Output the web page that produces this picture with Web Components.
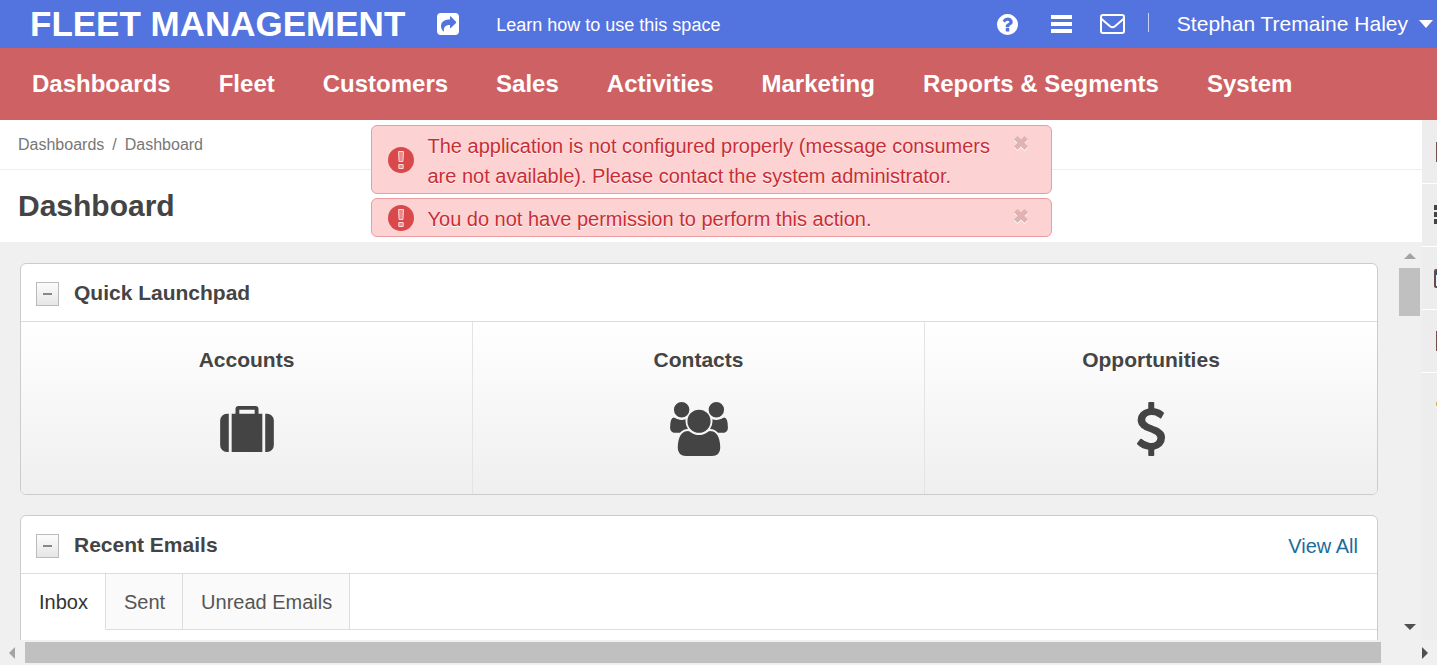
<!DOCTYPE html>
<html lang="en">
<head>
<meta charset="utf-8">
<title>Dashboard - Fleet Management</title>
<style>
html, body { margin: 0; height: 100%; }
body { font-family: "Liberation Sans", Arial, sans-serif; color: #444; background: #f0f0f0; overflow: hidden; }
</style>
</head>
<body>
<fleet-app></fleet-app>

<script>
const define = (name, html, setup) => customElements.define(name, class extends HTMLElement {
  connectedCallback() {
    if (this.shadowRoot) return;
    const root = this.attachShadow({ mode: 'open' });
    const template = document.createElement('template');
    template.innerHTML = html;
    root.append(template.content.cloneNode(true));
    if (setup) setup(root, this);
  }
});

const ICONS = {
  share: ['0 0 22 22', '<path fill-rule="evenodd" d="M4 0H18Q22 0 22 4V18Q22 22 18 22H4Q0 22 0 18V4Q0 0 4 0ZM13 3.6V6.500C7 6.500 4 9 4 13C4 15.500 5 17.400 7 18.800C6.400 14.500 8 12 13 12V14.800Q13 15.600 13.800 15L19 9.900Q19.500 9.300 19 8.700L13.800 3.400Q13 2.800 13 3.600Z"/>'],
  help: ['128 128 1536 1536', '<path d="M1024 1376v-192q0-14-9-23t-23-9h-192q-14 0-23 9t-9 23v192q0 14 9 23t23 9h192q14 0 23-9t9-23zm256-672q0-88-55.500-163t-138.500-116-170-41q-243 0-371 213-15 24 8 42l132 100q7 6 19 6 16 0 25-12 53-68 86-92 34-24 86-24 48 0 85.500 26t37.500 59q0 38-20 61t-68 45q-63 28-115.500 86.500t-52.500 125.500v36q0 14 9 23t23 9h192q14 0 23-9t9-23q0-19 21.500-49.500t54.500-49.500q32-18 49-28.500t46-35 44.500-48 28-60.500 12.500-81zm384 192q0 209-103 385.500t-279.500 279.500-385.500 103-385.500-103-279.500-279.500-103-385.500 103-385.500 279.500-279.500 385.500-103 385.500 103 279.500 279.500 103 385.500z"/>'],
  bars: ['0 0 21 18', '<path d="M0 0h21v4H0zM0 7h21v4H0zM0 14h21v4H0z"/>'],
  mail: ['0 0 25 20', '<g fill="none" stroke="currentColor" stroke-width="2"><rect x="1" y="1" width="23" height="18" rx="2"/><path d="M1 4.500L10 12.200Q12.500 14.200 15 12.200L24 4.500"/></g>'],
  caret: ['0 0 14 8', '<path d="M0 0H14L7 8Z"/>'],
  alert: ['0 0 26 26', '<circle cx="13" cy="13" r="13"/><path d="M10.500 4.500h5l-.6 10h-3.800zM10.800 17.500h4.400v4h-4.400z" fill="#e98a8a" stroke="#fbdada" stroke-width="1"/>'],
  close: ['0 0 14 14', '<path d="M3.500 0L7 3.500L10.500 0L14 3.500L10.500 7L14 10.500L10.500 14L7 10.500L3.500 14L0 10.500L3.500 7L0 3.500Z"/>'],
  suitcase: ['0 0 1792 1536', '<path d="M640 256h512V128H640v128zM288 256v1280h-64q-92 0-158-66T0 1312V480q0-92 66-158t158-66h64zm1120 0v1280H384V256h128V96q0-40 28-68t68-28h576q40 0 68 28t28 68v160h128zm384 224v832q0 92-66 158t-158 66h-64V256h64q92 0 158 66t66 158z"/>'],
  users: ['64 0 1920 1792', '<path d="M657 896q-162 5-265 128h-134q-82 0-138-40.500t-56-118.500q0-353 124-353 6 0 43.500 21t97.500 42.500 119 21.500q67 0 133-23-5 37-5 66 0 139 81 256zm1071 637q0 120-73 189.500t-194 69.500h-874q-121 0-194-69.500t-73-189.500q0-53 3.500-103.500t14-109 26.500-108.500 43-97.500 62-81 85.500-53.500 111.500-20q10 0 43 21.500t73 48 107 48 135 21.500 135-21.500 107-48 73-48 43-21.500q61 0 111.500 20t85.500 53.500 62 81 43 97.500 26.500 108.500 14 109 3.500 103.500zm-1024-1277q0 106-75 181t-181 75-181-75-75-181 75-181 181-75 181 75 75 181zm704 384q0 159-112.500 271.500t-271.500 112.500-271.500-112.500-112.500-271.500 112.500-271.500 271.500-112.500 271.500 112.500 112.500 271.500zm576 225q0 78-56 118.500t-138 40.500h-134q-103-123-265-128 81-117 81-256 0-29-5-66 66 23 133 23 59 0 119-21.500t97.500-42.500 43.500-21q124 0 124 353zm-128-609q0 106-75 181t-181 75-181-75-75-181 75-181 181-75 181 75 75 181z"/>'],
  dollar: ['430 0 932 1792', '<path d="M1362 1185q0 153-99.500 263.500t-258.500 136.500v175q0 14-9 23t-23 9h-135q-13 0-22.500-9.500t-9.500-22.500v-175q-66-9-127.500-31t-101.500-44.500-74-48-46.500-37.500-17.500-18q-17-21-2-41l103-135q7-10 23-12 15-2 24 9l2 2q113 99 243 125 37 8 74 8 81 0 142.500-43t61.500-122q0-28-15-53t-33.500-42-58.500-37.500-66-32-80-32.500q-39-16-61.500-25t-61.500-26.500-62.500-31-56.500-35.500-53.500-42.500-43.500-49-35.500-58-21-66.500-8.500-78q0-138 98-242t255-134v-180q0-13 9.500-22.500t22.500-9.500h135q14 0 23 9t9 23v176q57 6 110.500 23t87 33.500 63.500 37.500 39 29 15 14q17 18 5 38l-81 146q-8 15-23 16-14 3-27-7-3-3-14.500-12t-39-26.500-58.500-32-74.500-26-85.500-11.500q-95 0-155 43t-60 111q0 26 8.500 48t29.500 41.500 39.500 33 56 31 60.500 27 70 27.500q53 20 81 31.500t76 35 75.500 42.500 62 50 53 63.500 31.500 76.500 13 94z"/>'],
  note: ['0 0 20 20', '<rect x="1" y="1" width="18" height="18" fill="none" stroke="#76504a" stroke-width="2"/>'],
  list: ['0 0 20 20', '<path d="M0 0h5v5H0zM0 7h5v5H0zM0 14h5v5H0zM7 0h13v5H7zM7 7h13v5H7zM7 14h13v5H7z"/>'],
  calendar: ['0 0 20 20', '<rect x="1" y="2" width="18" height="17" rx="1" fill="#eaf4fc" stroke="#654b4b" stroke-width="2"/><path d="M2 3h16v4H2z" fill="#35526b"/>'],
  star: ['0 0 20 20', '<path d="M10 0l3 7 7 1-5 5 1 7-6-4-6 4 1-7-6-3 1-3 6-1z" fill="#e8a84c"/>']
};

define('fleet-icon', `
<style>
:host { display: block; flex: none; width: var(--w, 20px); height: var(--h, 20px); }
svg { display: block; width: 100%; height: 100%; fill: currentColor; }
</style><svg aria-hidden="true"></svg>`, (root, host) => {
  const [box, body] = ICONS[host.getAttribute('name')];
  const svg = root.querySelector('svg');
  svg.setAttribute('viewBox', box);
  svg.innerHTML = body;
});

define('fleet-topbar', `
<style>
:host { display: flex; align-items: center; height: 48px; background: #5373df; color: #fff; padding: 0 4px 0 30px; white-space: nowrap; }
h1 { margin: 0; font-size: 35px; line-height: 48px; }
a { color: inherit; text-decoration: none; font-size: 18px; line-height: 48px; padding-top: 1px; }
button { font: inherit; color: inherit; background: none; border: 0; padding: 0; display: flex; align-items: center; }
.share { margin: 0 37px 0 32px; }
.tools { margin-left: auto; display: flex; align-items: center; }
.tools button { margin-right: 28px; }
.tools .bars { margin-left: 5px; }
.tools > button:not(.user) { height: 44px; }
.rule { width: 1px; height: 19px; background: #c9d3f5; margin: 0 28px 4px -5px; }
.tools .user { font-size: 21px; line-height: 48px; gap: 11px; margin: 0; }
</style>
<h1>FLEET MANAGEMENT</h1>
<button class="share" aria-label="Share"><fleet-icon name="share" style="--w:22px;--h:22px"></fleet-icon></button>
<a href="#learn">Learn how to use this space</a>
<div class="tools">
  <button aria-label="Help"><fleet-icon name="help" style="--w:21px;--h:21px"></fleet-icon></button>
  <button class="bars" aria-label="Menu"><fleet-icon name="bars" style="--w:21px;--h:18px"></fleet-icon></button>
  <button aria-label="Mail"><fleet-icon name="mail" style="--w:25px;--h:20px"></fleet-icon></button>
  <span class="rule"></span>
  <button class="user">Stephan Tremaine Haley <fleet-icon name="caret" style="--w:14px;--h:8px"></fleet-icon></button>
</div>`);

define('fleet-nav', `
<style>
:host { display: block; background: #cd6163; }
nav { display: flex; gap: 48px; height: 72px; padding: 0 32px; }
a { color: #fff; font-size: 24px; font-weight: bold; line-height: 72px; text-decoration: none; white-space: nowrap; }
</style>
<nav><a href="#dashboards">Dashboards</a><a href="#fleet">Fleet</a><a href="#customers">Customers</a><a href="#sales">Sales</a><a href="#activities">Activities</a><a href="#marketing">Marketing</a><a href="#reports">Reports &amp; Segments</a><a href="#system">System</a></nav>`);

define('fleet-alert', `
<style>
:host { display: flex; align-items: center; position: relative; box-sizing: border-box; border: 1px solid #eb9c9f; border-radius: 6px; background: #fcd2d3; color: #c92d35; padding: 4px 56px 3px 16px; gap: 14px; font-size: 20px; line-height: 30px; text-shadow: 0 1px 0 #fff; }
p { margin: 0; padding-top: 1px; margin-bottom: -1px; }
fleet-icon { color: #d9494c; }
button { position: absolute; top: 10px; right: 23px; padding: 0; border: 0; background: none; filter: drop-shadow(0 1px 0 #fff); }
button fleet-icon { color: #dfb3b4; }
</style>
<fleet-icon name="alert" style="--w:26px;--h:26px"></fleet-icon>
<p><slot></slot></p>
<button aria-label="Close"><fleet-icon name="close" style="--w:14px;--h:14px"></fleet-icon></button>`);

define('fleet-page-head', `
<style>
:host { display: block; background: #fff; }
nav { display: flex; gap: 8px; padding: 0 18px; line-height: 49px; font-size: 16px; border-bottom: 1px solid #eee; color: #777; }
a { color: inherit; text-decoration: none; }
h2 { margin: 0; padding: 0 18px; font-size: 30px; line-height: 72px; color: #444; }
</style>
<nav aria-label="Breadcrumb"><a href="#dashboards">Dashboards</a><span>/</span><span>Dashboard</span></nav>
<h2>Dashboard</h2>`);

define('fleet-panel', `
<style>
:host { display: block; border: 1px solid #ccc; border-radius: 6px; background: #fff; overflow: hidden; margin-bottom: 20px; }
header { display: flex; align-items: center; height: 57px; padding: 0 19px 0 15px; border-bottom: 1px solid #ddd; }
button { box-sizing: border-box; width: 23px; height: 24px; margin: 3px 15px 0 0; padding: 0; border: 1px solid #bbb; background: linear-gradient(#fcfcfc, #e6e6e6); display: grid; place-items: center; }
button::before { content: ""; width: 9px; height: 2px; background: #888; }
h3 { margin: 0; flex: 1; font-size: 21px; line-height: 28px; color: #444; }
</style>
<header><button aria-label="Collapse"></button><h3></h3><slot name="action"></slot></header>
<slot></slot>`, (root, host) => { root.querySelector('h3').textContent = host.getAttribute('heading'); });

define('fleet-launchpad', `
<style>
:host { display: grid; grid-template-columns: repeat(3, 1fr); background: linear-gradient(#fff, #efefef); }
a { box-sizing: border-box; height: 172px; padding-top: 24px; display: flex; flex-direction: column; align-items: center; color: #444; text-decoration: none; font-size: 21px; line-height: 28px; font-weight: bold; border-right: 1px solid #e4e4e4; }
a:last-child { border-right: 0; }
.glyph { height: 54px; margin-top: 28px; display: grid; place-items: center; }
</style>
<a href="#accounts">Accounts<span class="glyph"><fleet-icon name="suitcase" style="--w:54px;--h:46px"></fleet-icon></span></a>
<a href="#contacts">Contacts<span class="glyph"><fleet-icon name="users" style="--w:58px;--h:54px"></fleet-icon></span></a>
<a href="#opportunities">Opportunities<span class="glyph"><fleet-icon name="dollar" style="--w:28px;--h:54px"></fleet-icon></span></a>`);

define('fleet-tabs', `
<style>
:host { display: flex; min-height: 140px; align-items: flex-start; }
div { display: flex; flex: 1; }
button { font: inherit; font-size: 20px; line-height: 54px; padding: 1px 17px 0 18px; color: #555; background: #fafafa; border: solid #ddd; border-width: 0 1px 1px 0; }
button[aria-selected="true"] { background: #fff; color: #333; border-bottom-color: #fff; }
.rest { border-bottom: 1px solid #ddd; }
</style>
<div role="tablist"><button role="tab" aria-selected="true">Inbox</button><button role="tab">Sent</button><button role="tab">Unread Emails</button><div class="rest" role="presentation"></div></div>`);

define('fleet-scrollbar', `
<style>
:host { display: flex; box-sizing: border-box; background: #f0f0f0; align-items: center; color: #a3a3a3; }
:host([vertical]) { flex-direction: column; width: 25px; padding: 11px 0 10px; }
:host(:not([vertical])) { height: 25px; padding: 0 9px; }
i { flex: none; border: 6px solid transparent; }
.thumb { background: #c0c0c0; }
.end { color: #505050; }
:host([vertical]) .start { border-width: 0 6px 6px; border-bottom-color: currentColor; }
:host([vertical]) .end { border-width: 6px 6px 0; border-top-color: currentColor; margin-top: auto; }
:host([vertical]) .thumb { width: 21px; height: 48px; margin-top: 9px; }
:host(:not([vertical])) .start { border-width: 6px 6px 6px 0; border-right-color: currentColor; }
:host(:not([vertical])) .end { border-width: 6px 0 6px 6px; border-left-color: currentColor; }
:host(:not([vertical])) .thumb { flex: 1; height: 21px; margin: 0 41px 0 10px; }
</style>
<i class="start"></i><span class="thumb"></span><i class="end"></i>`);

define('fleet-rail', `
<style>
:host { display: block; width: 15px; overflow: hidden; background: #ededed; }
button { display: flex; align-items: center; box-sizing: border-box; width: 40px; height: 63px; padding: 0 0 0 12px; border: 0; border-bottom: 1px solid #fff; background: none; color: #444; }
button:first-of-type { height: 64px; }
.inset { padding-left: 14px; }
button:last-of-type { border: 0; }
</style>
<button class="inset" aria-label="Notes"><fleet-icon name="note"></fleet-icon></button>
<button aria-label="List"><fleet-icon name="list"></fleet-icon></button>
<button aria-label="Calendar"><fleet-icon name="calendar"></fleet-icon></button>
<button class="inset" aria-label="Documents"><fleet-icon name="note"></fleet-icon></button>
<button class="inset" aria-label="Favourites"><fleet-icon name="star"></fleet-icon></button>`);

define('fleet-app', `
<style>
:host { display: flex; flex-direction: column; height: 100vh; }
.middle { flex: 1; min-height: 0; display: flex; }
main { flex: 1; min-width: 0; position: relative; display: flex; flex-direction: column; }
.alerts { position: absolute; top: 5px; left: 0; right: 0; margin: 0 auto; width: 681px; max-width: 100%; display: grid; gap: 4px; }
.body { flex: 1; min-height: 0; display: flex; }
.content { flex: 1; min-width: 0; overflow: hidden; padding: 21px 19px 0 20px; }
a { color: #1a6c9c; font-size: 20px; line-height: 28px; padding-top: 2px; text-decoration: none; }
</style>
<fleet-topbar></fleet-topbar>
<fleet-nav></fleet-nav>
<div class="middle">
  <main>
    <fleet-page-head></fleet-page-head>
    <div class="body">
      <div class="content">
        <fleet-panel heading="Quick Launchpad"><fleet-launchpad></fleet-launchpad></fleet-panel>
        <fleet-panel heading="Recent Emails"><a slot="action" href="#emails">View All</a><fleet-tabs></fleet-tabs></fleet-panel>
      </div>
      <fleet-scrollbar vertical></fleet-scrollbar>
    </div>
    <div class="alerts" role="alert">
      <fleet-alert>The application is not configured properly (message consumers are not available). Please contact the system administrator.</fleet-alert>
      <fleet-alert>You do not have permission to perform this action.</fleet-alert>
    </div>
  </main>
  <fleet-rail></fleet-rail>
</div>
<fleet-scrollbar></fleet-scrollbar>`);
</script>
</body>
</html>
